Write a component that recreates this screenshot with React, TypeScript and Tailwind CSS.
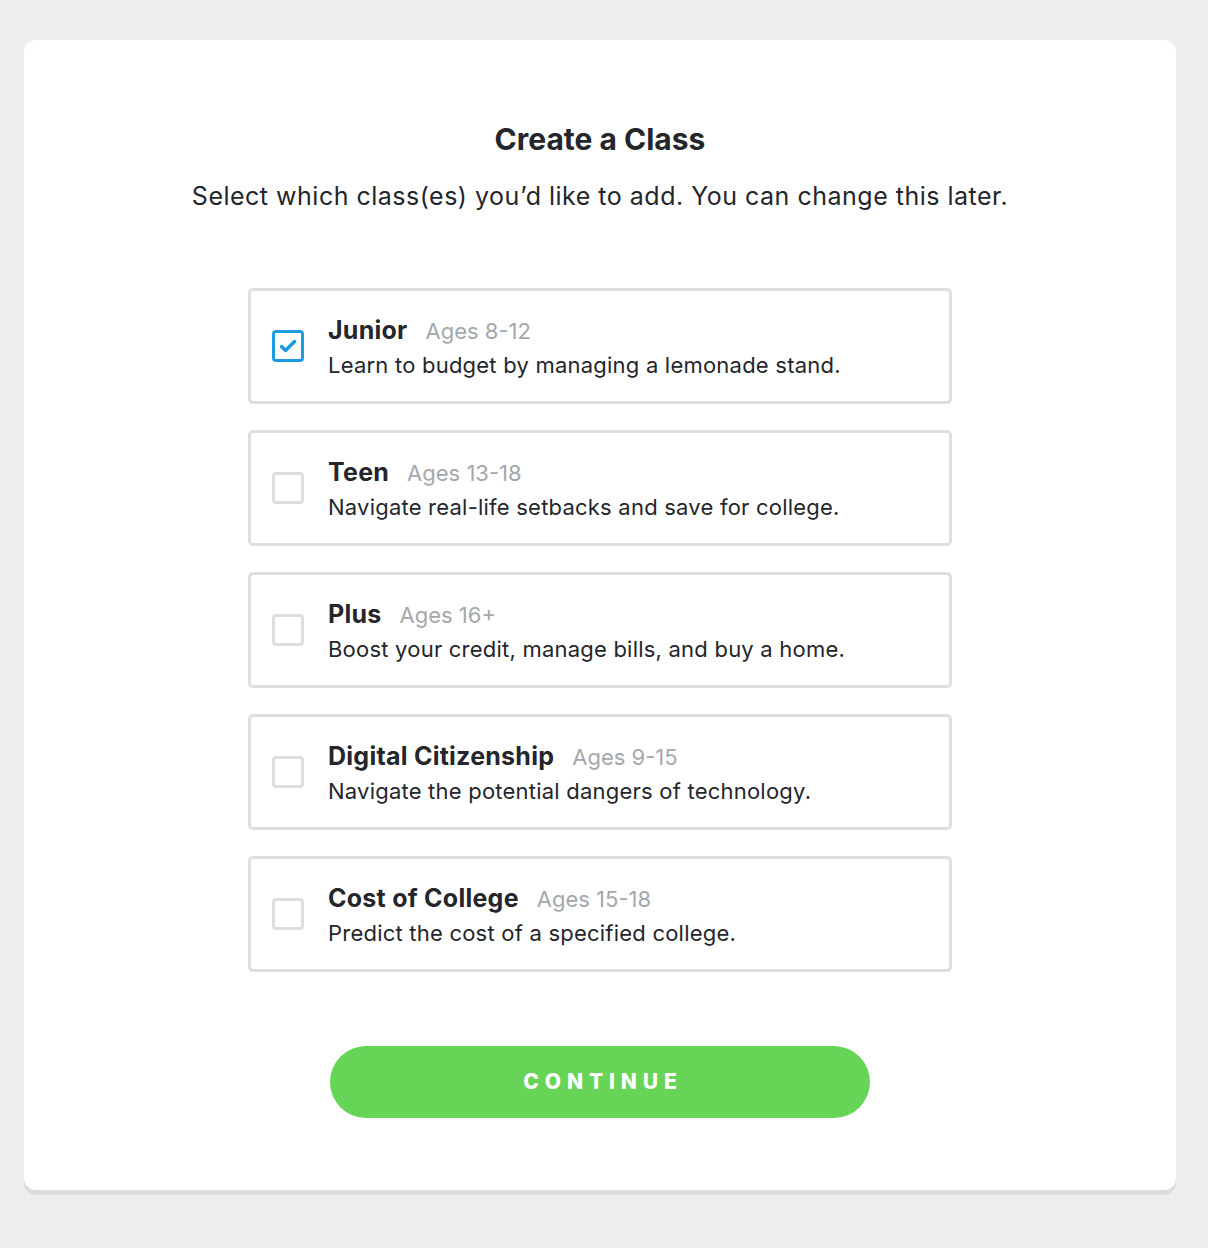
import { useState } from 'react';

const classes = [
  { name: 'Junior', ages: 'Ages 8-12', desc: 'Learn to budget by managing a lemonade stand.' },
  { name: 'Teen', ages: 'Ages 13-18', desc: 'Navigate real-life setbacks and save for college.' },
  { name: 'Plus', ages: 'Ages 16+', desc: 'Boost your credit, manage bills, and buy a home.' },
  { name: 'Digital Citizenship', ages: 'Ages 9-15', desc: 'Navigate the potential dangers of technology.' },
  { name: 'Cost of College', ages: 'Ages 15-18', desc: 'Predict the cost of a specified college.' },
];

export default function App() {
  const [selected, setSelected] = useState<string[]>(['Junior']);

  const toggle = (name: string) => {
    setSelected((prev) =>
      prev.includes(name) ? prev.filter((n) => n !== name) : [...prev, name]
    );
  };

  return (
    <div
      className="min-h-[1248px] bg-[#eeeeee] pt-10 pr-8 pb-[53px] pl-6"
      style={{ fontFamily: 'Inter, "Noto Sans", sans-serif' }}
    >
      <div className="flex flex-col items-center rounded-xl bg-white pt-[81px] pb-[72px] shadow-[0_5px_0_#dadde0]">
        <h1 className="text-[30px] font-bold leading-9 tracking-normal text-[#24262b]">
          Create a Class
        </h1>
        <p className="mt-[23px] text-[25px] leading-8 tracking-[0.02em] text-[#24262b]">
          Select which class(es) you’d like to add. You can change this later.
        </p>

        <div className="mt-[76px] flex w-[704px] flex-col gap-[26px]">
          {classes.map((c) => {
            const checked = selected.includes(c.name);
            return (
              <button
                key={c.name}
                onClick={() => toggle(c.name)}
                className="flex h-[116px] items-center rounded-[5px] border-[3px] border-[#dcdfe2] bg-white pl-[21px] text-left"
              >
                <span
                  className={
                    checked
                      ? 'flex h-8 w-8 shrink-0 items-center justify-center rounded-[4px] border-[3px] border-[#1b9ce2]'
                      : 'flex h-8 w-8 shrink-0 items-center justify-center rounded-[4px] border-[3px] border-[#dcdfe2]'
                  }
                >
                  {checked && (
                    <svg width="18" height="14" viewBox="0 0 18 14" fill="none">
                      <path
                        d="M2.5 7.5l4 4L15.5 2.5"
                        stroke="#1b9ce2"
                        strokeWidth="3.5"
                        strokeLinecap="round"
                        strokeLinejoin="round"
                      />
                    </svg>
                  )}
                </span>
                <span className="ml-6 flex flex-col">
                  <span className="flex items-baseline gap-[18px]">
                    <span className="text-[25px] font-bold leading-8 tracking-[0.01em] text-[#24262b]">
                      {c.name}
                    </span>
                    <span className="text-[22px] leading-8 tracking-normal text-[#a4a8ac]">
                      {c.ages}
                    </span>
                  </span>
                  <span className="mt-[4px] text-[22px] leading-7 tracking-[0.01em] text-[#24262b]">
                    {c.desc}
                  </span>
                </span>
              </button>
            );
          })}
        </div>

        <button className="mt-[74px] flex h-[72px] w-[540px] items-center justify-center rounded-full bg-[#65d457] pl-[6px] text-[21px] font-extrabold tracking-[0.28em] text-white">
          CONTINUE
        </button>
      </div>
    </div>
  );
}
